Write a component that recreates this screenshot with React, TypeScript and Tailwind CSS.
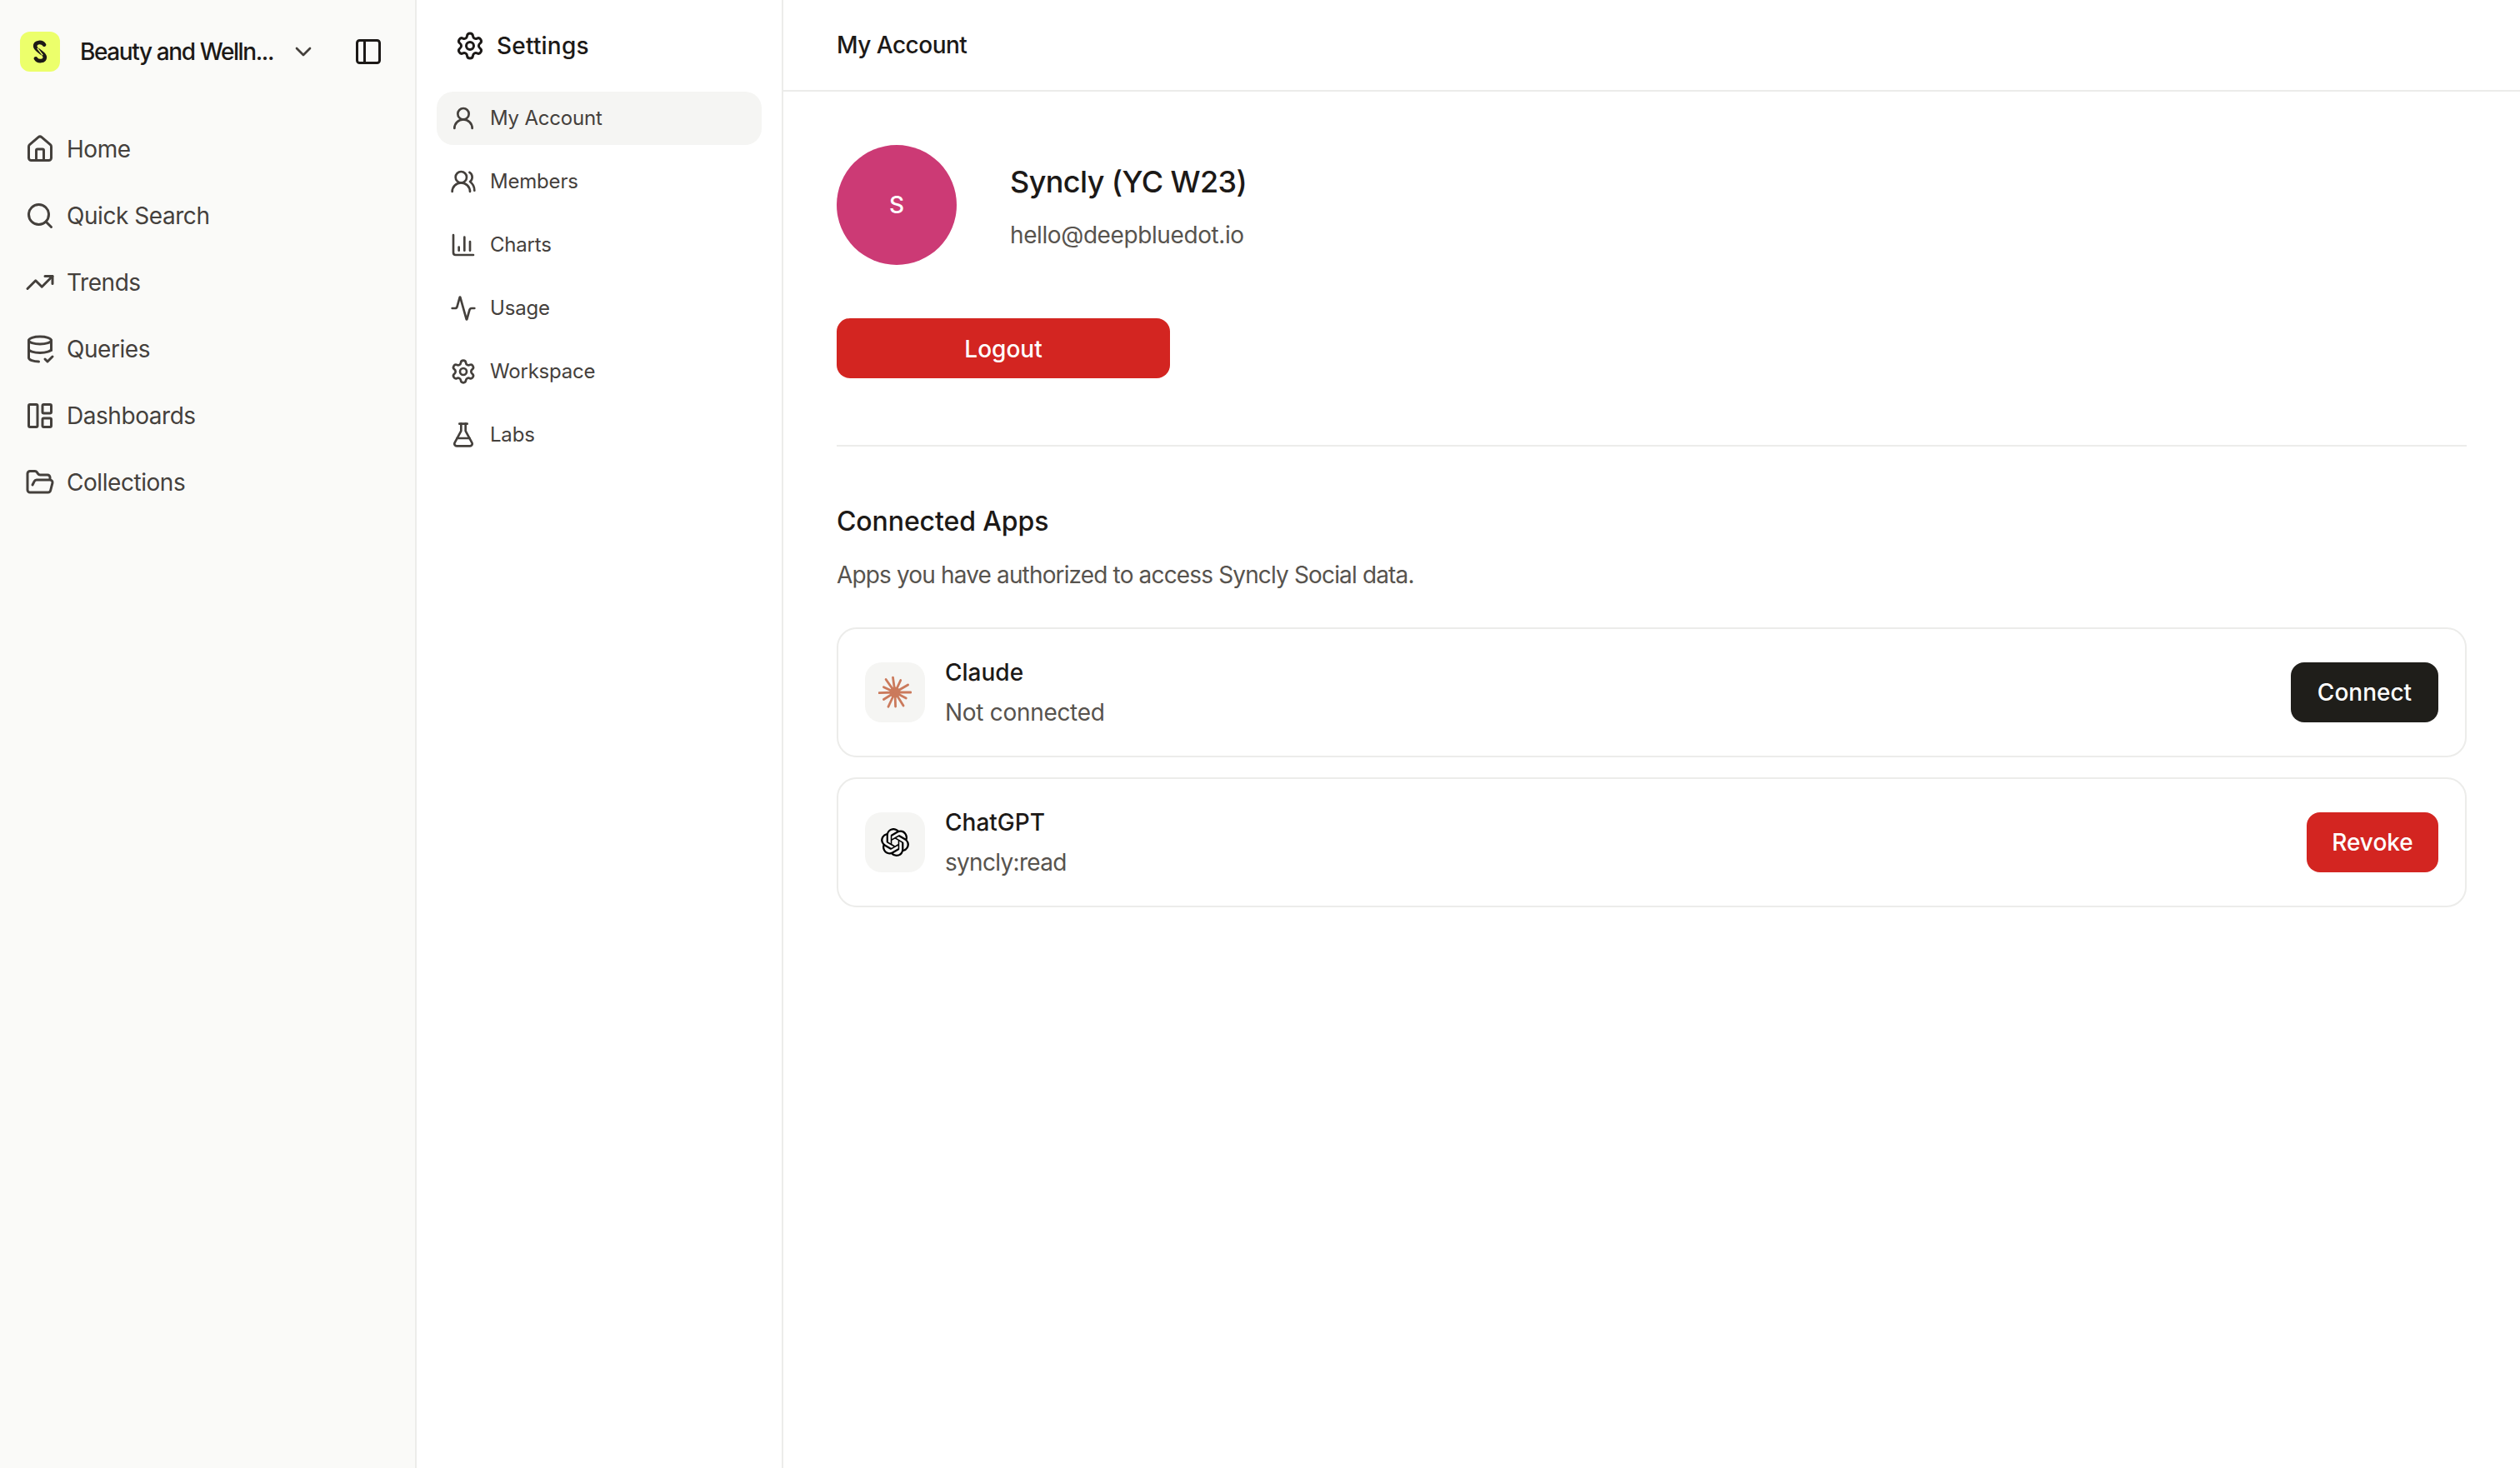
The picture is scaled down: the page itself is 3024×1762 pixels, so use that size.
import {
  Activity,
  ChartColumn,
  ChevronDown,
  FlaskConical,
  FolderOpen,
  House,
  LayoutPanelLeft,
  PanelLeft,
  Search,
  Settings,
  TrendingUp,
  UserRound,
  UsersRound,
} from 'lucide-react';
import { SiOpenai } from 'react-icons/si';

function QueriesIcon({ className }: { className?: string }) {
  return (
    <svg viewBox="0 0 24 24" fill="none" stroke="currentColor" strokeWidth="2" strokeLinecap="round" strokeLinejoin="round" className={className}>
      <ellipse cx="12" cy="5" rx="9" ry="3" />
      <path d="M3 5v14c0 1.6 3.6 3 8 3" />
      <path d="M21 5v8" />
      <path d="M3 12c0 1.66 4 3 9 3s9-1.34 9-3" />
      <path d="m16 20 2 2 4-4" />
    </svg>
  );
}

function SynclyLogo() {
  return (
    <svg viewBox="0 0 24 32" fill="none" strokeLinecap="round" className="h-[28px] w-[20px]">
      <g stroke="#1c1917" strokeWidth="5.500">
        <path d="M18 6C15 1 5 1.500 5 8c0 4 4 6 8.500 9.500" />
        <path d="M6 26c3 5 13 4.500 13-2 0-4-4-6-8.500-9.500" />
      </g>
      <path d="M8.500 11.500 15.500 20.500" stroke="#ecff6b" strokeWidth="1.500" />
    </svg>
  );
}

function ClaudeMark() {
  const rays = [
    [0, 19], [28, 15], [58, 19], [88, 17], [115, 19], [148, 16],
    [178, 19], [205, 15], [235, 19], [262, 18], [295, 16], [330, 18],
  ];
  return (
    <svg viewBox="-20 -20 40 40" stroke="#cb7a5c" strokeLinecap="round" className="h-[40px] w-[40px]">
      <circle r="6.500" fill="#cb7a5c" stroke="none" />
      {rays.map(([deg, len]) => (
        <line key={deg} x1="0" y1="0" x2={len * Math.cos((deg * Math.PI) / 180)} y2={len * Math.sin((deg * Math.PI) / 180)} strokeWidth="2.800" />
      ))}
    </svg>
  );
}

const mainNav = [
  { icon: House, label: 'Home' },
  { icon: Search, label: 'Quick Search' },
  { icon: TrendingUp, label: 'Trends' },
  { icon: QueriesIcon, label: 'Queries' },
  { icon: LayoutPanelLeft, label: 'Dashboards' },
  { icon: FolderOpen, label: 'Collections' },
];

const settingsNav = [
  { icon: UserRound, label: 'My Account', active: true },
  { icon: UsersRound, label: 'Members' },
  { icon: ChartColumn, label: 'Charts' },
  { icon: Activity, label: 'Usage' },
  { icon: Settings, label: 'Workspace' },
  { icon: FlaskConical, label: 'Labs' },
];

export default function App() {
  return (
    <div className="flex min-h-screen bg-white font-['Inter',sans-serif] text-[28px] text-[#1c1917]">
      {/* Main sidebar */}
      <aside className="w-[500px] shrink-0 border-r-2 border-[#ececea] bg-[#fafaf8]">
        <div className="flex items-center pl-6 pt-[38px]">
          <div className="flex h-[48px] w-[48px] items-center justify-center rounded-[12px] bg-[#ecff6b]">
            <SynclyLogo />
          </div>
          <span className="ml-6 w-[232px] whitespace-nowrap font-[550] tracking-[-1.4px]">Beauty and Welln...</span>
          <ChevronDown className="ml-5 h-[32px] w-[32px] text-[#44403c]" />
          <PanelLeft className="ml-[44px] h-[36px] w-[36px] text-[#1c1917]" />
        </div>
        <nav className="mt-[53px]">
          {mainNav.map((item) => {
            const Icon = item.icon;
            return (
              <div key={item.label} className="flex h-[80px] items-center gap-[14px] pl-[30px] tracking-[-0.45px] text-[#44403c]">
                <Icon className="h-[36px] w-[36px]" />
                <span>{item.label}</span>
              </div>
            );
          })}
        </nav>
      </aside>

      {/* Settings sidebar */}
      <aside className="w-[440px] shrink-0 border-r-2 border-[#ececea] bg-white">
        <div className="flex items-center gap-[14px] pl-[46px] pt-[34px]">
          <Settings className="h-[36px] w-[36px]" />
          <span className="font-[550] tracking-[0.2px]">Settings</span>
        </div>
        <nav className="mt-[34px] flex flex-col gap-3 px-6">
          {settingsNav.map((item) => {
            const Icon = item.icon;
            return (
              <div
                key={item.label}
                className={`flex h-[64px] items-center gap-4 rounded-[20px] pl-4 text-[24px] tracking-[-0.2px] text-[#44403c] ${item.active ? 'bg-[#f5f5f3]' : ''}`}
              >
                <Icon className="h-[32px] w-[32px]" />
                <span>{item.label}</span>
              </div>
            );
          })}
        </nav>
      </aside>

      {/* Main content */}
      <main className="min-w-0 flex-1">
        <header className="flex h-[110px] items-center border-b-2 border-[#ececea] pl-16">
          <h1 className="font-[550] tracking-[-0.5px]">My Account</h1>
        </header>
        <div className="px-16 pt-16">
          <div className="flex items-center gap-16">
            <div className="flex h-[144px] w-[144px] items-center justify-center rounded-full bg-[#cc3a75] font-medium text-white">S</div>
            <div className="pt-[6px]">
              <h2 className="text-[36px] font-[550] leading-[44px] tracking-[-0.6px]">Syncly (YC W23)</h2>
              <p className="mt-[22px] leading-[40px] tracking-[-0.4px] text-[#57534e]">hello@deepbluedot.io</p>
            </div>
          </div>
          <button className="mt-16 flex h-[72px] w-[400px] items-center justify-center rounded-[16px] bg-[#d32521] pt-[2px] font-medium text-white">Logout</button>
          <div className="mt-20 h-[2px] bg-[#ececea]" />

          <h2 className="mt-[68px] text-[32px] font-[550] leading-[44px] tracking-[-0.1px]">Connected Apps</h2>
          <p className="mt-[22px] leading-[40px] tracking-[-0.85px] text-[#57534e]">Apps you have authorized to access Syncly Social data.</p>

          <div className="mt-[43px] flex flex-col gap-6">
            <div className="flex h-[156px] items-center justify-between rounded-[24px] border-2 border-[#ececea] px-8">
              <div className="flex items-center gap-6">
                <div className="flex h-[72px] w-[72px] items-center justify-center rounded-[20px] bg-[#f5f5f3]">
                  <ClaudeMark />
                </div>
                <div>
                  <div className="font-[550] leading-[40px]">Claude</div>
                  <div className="mt-2 leading-[40px] tracking-[-0.3px] text-[#57534e]">Not connected</div>
                </div>
              </div>
              <button className="flex h-[72px] w-[177px] items-center justify-center rounded-[16px] bg-[#1f1e1a] font-medium text-white">Connect</button>
            </div>
            <div className="flex h-[156px] items-center justify-between rounded-[24px] border-2 border-[#ececea] px-8">
              <div className="flex items-center gap-6">
                <div className="flex h-[72px] w-[72px] items-center justify-center rounded-[20px] bg-[#f5f5f3]">
                  <SiOpenai className="h-[34px] w-[34px] text-black" />
                </div>
                <div>
                  <div className="font-[550] leading-[40px]">ChatGPT</div>
                  <div className="mt-2 leading-[40px] tracking-[-0.7px] text-[#57534e]">syncly:read</div>
                </div>
              </div>
              <button className="flex h-[72px] w-[158px] items-center justify-center rounded-[16px] bg-[#d32521] font-medium text-white">Revoke</button>
            </div>
          </div>
        </div>
      </main>
    </div>
  );
}
